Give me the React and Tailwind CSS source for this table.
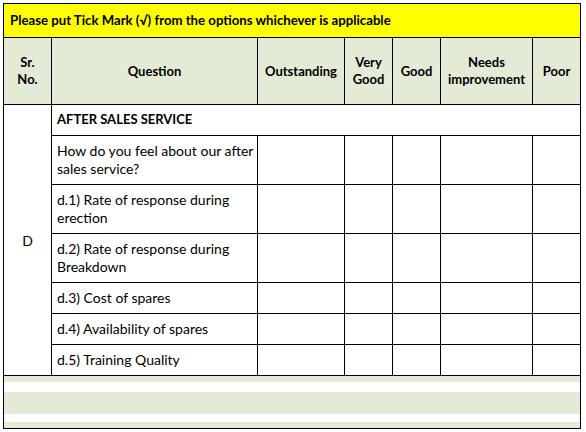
const rows = [
  { q: ['How do you feel about our after', 'sales service?'], tall: true },
  { q: ['d.1) Rate of response during', 'erection'], tall: true },
  { q: ['d.2) Rate of response during', 'Breakdown'], tall: true },
  { q: ['d.3) Cost of spares'] },
  { q: ['d.4) Availability of spares'] },
  { q: ['d.5) Training Quality'] },
];

const head = 'bg-[#e3ebd6] border-r border-b border-black flex items-center justify-center text-center font-bold leading-[17px]';
const cell = 'border-r border-b border-black';

export default function App() {
  return (
    <div className="p-[3px] bg-white" style={{ fontFamily: 'Lato, "Liberation Sans", sans-serif' }}>
      <div className="w-[578px] border border-black text-[13px] text-black">
        <div className="h-[34px] bg-[#ffff00] border-b border-black flex items-center pl-[6px] font-bold text-[13.2px]">
          Please put Tick Mark (√) from the options whichever is applicable
        </div>
        <div className="grid grid-cols-[48px_206px_87px_48px_48px_92px_47px] grid-rows-[67px_31px_49px_49px_49px_31px_31px_31px]">
          <div className={head}>Sr.<br />No.</div>
          <div className={head}>Question</div>
          <div className={head}>Outstanding</div>
          <div className={head}>Very<br />Good</div>
          <div className={head}>Good</div>
          <div className={head}>Needs<br />improvement</div>
          <div className={head + ' border-r-0'}>Poor</div>

          <div className={cell + ' row-span-7 flex items-center justify-center text-[14px]'}>D</div>
          <div className="col-span-6 border-b border-black flex items-center pl-[5px] font-bold">
            AFTER SALES SERVICE
          </div>

          {rows.map((r, i) => (
            <Row key={i} q={r.q} />
          ))}
        </div>
        <div className="flex flex-col">
          <div className="h-[6px] bg-[#e3ebd6]" />
          <div className="h-[10px]" />
          <div className="h-[22px] bg-[#e3ebd6]" />
          <div className="h-[8px]" />
          <div className="h-[6px] bg-[#e3ebd6]" />
        </div>
      </div>
    </div>
  );
}

function Row({ q }) {
  return (
    <>
      <div className={cell + ' flex flex-col justify-center pl-[5px] leading-[18px] text-[14px]'}>
        {q.map((t, i) => (
          <span key={i}>{t}</span>
        ))}
      </div>
      <div className={cell} />
      <div className={cell} />
      <div className={cell} />
      <div className={cell} />
      <div className="border-b border-black" />
    </>
  );
}
